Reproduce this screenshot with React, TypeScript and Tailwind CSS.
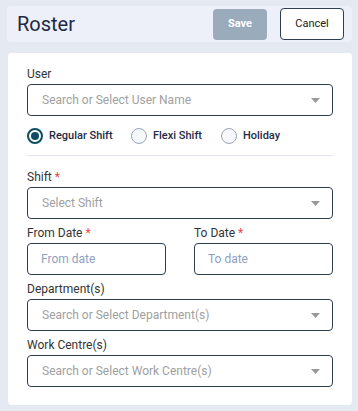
import React from "react";

function Chevron() {
  return (
    <svg width="9" height="5" viewBox="0 0 9 5" className="shrink-0">
      <path d="M0 0h9L4.5 5z" fill="#9a9a9a" />
    </svg>
  );
}

function Label({ text, required }: { text: string; required?: boolean }) {
  return (
    <div className="h-4 text-[12px] leading-4 text-[#333]">
      {text}
      {required && <span className="ml-[3px] text-[#ef4444]">*</span>}
    </div>
  );
}

function SelectBox({ placeholder }: { placeholder: string }) {
  return (
    <div className="mt-[2px] flex h-8 items-center justify-between rounded-[4px] border border-[#2f3e4e] pl-[14px] pr-[12px]">
      <span className="text-[12px] text-[#a0a0a0]">{placeholder}</span>
      <Chevron />
    </div>
  );
}

function Radio({ label, checked }: { label: string; checked?: boolean }) {
  return (
    <div className="flex items-center gap-[6px]">
      {checked ? (
        <span className="flex h-4 w-4 items-center justify-center rounded-full border-2 border-[#0f4c63]">
          <span className="h-[8px] w-[8px] rounded-full bg-[#0f4c63]" />
        </span>
      ) : (
        <span className="h-4 w-4 rounded-full border border-[#9aa5b8] bg-[#f6f7fb]" />
      )}
      <span className="text-[11px] font-medium text-[#1f2a44]">{label}</span>
    </div>
  );
}

export default function App() {
  return (
    <div
      className="h-[411px] w-[358px] bg-[#e5e9f2] pt-[6px]"
      style={{ fontFamily: "Roboto, 'Liberation Sans', sans-serif" }}
    >
      {/* Header */}
      <div className="ml-[7px] flex h-[36px] w-[345px] items-center justify-between rounded-[4px] bg-[#edf0f8] pl-[10px] pr-[8px]">
        <h1 className="text-[20px] font-normal text-[#1f2a44]">Roster</h1>
        <div className="flex items-center gap-[13px]">
          <button className="h-[31px] w-[54px] rounded-[4px] bg-[#9aabbb] text-[11px] font-bold text-white">
            Save
          </button>
          <button className="h-[32px] w-[64px] rounded-[4px] border border-[#2f3e4e] bg-white text-[11px] text-[#222]">
            Cancel
          </button>
        </div>
      </div>

      {/* Form card */}
      <div className="ml-[8px] mt-[11px] w-[344px] rounded-[4px] bg-white px-[19px] pb-[18px] pt-[13px]">
        <Label text="User" />
        <SelectBox placeholder="Search or Select User Name" />

        <div className="mt-[12px] flex h-4 items-center">
          <div className="w-[104px]">
            <Radio label="Regular Shift" checked />
          </div>
          <div className="w-[90px]">
            <Radio label="Flexi Shift" />
          </div>
          <Radio label="Holiday" />
        </div>

        <div className="mt-[11px] h-px bg-[#e3e6ec]" />

        <div className="mt-[13px]">
          <Label text="Shift" required />
          <SelectBox placeholder="Select Shift" />
        </div>

        <div className="mt-[6px] grid grid-cols-2 gap-[28px]">
          <div>
            <Label text="From Date" required />
            <div className="mt-[2px] flex h-8 items-center rounded-[4px] border border-[#2f3e4e] pl-[13px]">
              <span className="text-[12px] text-[#8fa0c0]">From date</span>
            </div>
          </div>
          <div>
            <Label text="To Date" required />
            <div className="mt-[2px] flex h-8 items-center rounded-[4px] border border-[#2f3e4e] pl-[13px]">
              <span className="text-[12px] text-[#8fa0c0]">To date</span>
            </div>
          </div>
        </div>

        <div className="mt-[6px]">
          <Label text="Department(s)" />
          <SelectBox placeholder="Search or Select Department(s)" />
        </div>

        <div className="mt-[6px]">
          <Label text="Work Centre(s)" />
          <SelectBox placeholder="Search or Select Work Centre(s)" />
        </div>
      </div>
    </div>
  );
}
